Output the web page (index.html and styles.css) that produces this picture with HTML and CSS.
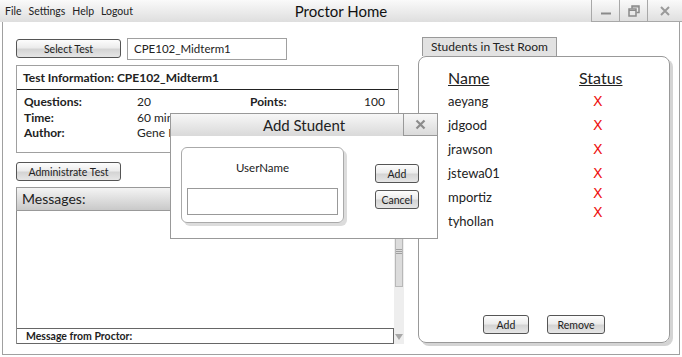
FILE: index.html
```html
<!DOCTYPE html>
<html lang="en">
<head>
    <meta charset="UTF-8">
    <meta name="viewport" content="width=device-width, initial-scale=1.0">
    <title>Proctor Home</title>
    <link rel="stylesheet" href="styles.css">
</head>
<body>
    <div class="window">
        <header class="titlebar">
            <nav class="menu">
                <span>File</span>
                <span>Settings</span>
                <span>Help</span>
                <span>Logout</span>
            </nav>
            <div class="title">Proctor Home</div>
            <div class="controls">
                <span class="ctl">
                    <svg width="12" height="12" viewBox="0 0 12 12"><path d="M1 8.5h10" stroke="#8a8a8a" stroke-width="2"/></svg>
                </span>
                <span class="ctl">
                    <svg width="12" height="12" viewBox="0 0 12 12" fill="none" stroke="#8a8a8a" stroke-width="1.5"><path d="M4 3.5V1h7v6.5H8.5"/><rect x="1" y="4" width="7" height="7"/><path d="M1 5.5h7M4 2h7" stroke-width="1"/></svg>
                </span>
                <span class="ctl">
                    <svg width="12" height="12" viewBox="0 0 12 12"><path d="M2 2l8 8M10 2l-8 8" stroke="#9a9a9a" stroke-width="2"/></svg>
                </span>
            </div>
        </header>

        <div class="frame">
            <section class="left">
                <div class="select-row">
                    <button class="btn btn-wide">Select Test</button>
                    <div class="field">CPE102_Midterm1</div>
                </div>

                <div class="info">
                    <div class="info-head">Test Information: CPE102_Midterm1</div>
                    <div class="info-grid">
                        <b>Questions:</b><span>20</span><b>Points:</b><span class="num">100</span>
                        <b>Time:</b><span>60 minutes</span><span></span><span></span>
                        <b>Author:</b><span>Gene Fisher</span><span></span><span></span>
                    </div>
                </div>

                <button class="btn btn-wide admin">Administrate Test</button>

                <div class="messages">
                    <div class="msg-head">Messages:</div>
                    <div class="msg-body">
                        <div class="msg-area">
                            <div class="proctor-row">Message from Proctor:</div>
                        </div>
                        <div class="scrollbar">
                            <div class="thumb"><i></i><i></i><i></i></div>
                            <div class="arrow"></div>
                        </div>
                    </div>
                </div>
            </section>

            <section class="right">
                <div class="tab">Students in Test Room</div>
                <div class="panel">
                    <div class="roster">
                        <span class="col-head">Name</span><span class="col-head">Status</span>
                        <span>aeyang</span><span class="mark">X</span>
                        <span>jdgood</span><span class="mark">X</span>
                        <span>jrawson</span><span class="mark">X</span>
                        <span>jstewa01</span><span class="mark">X</span>
                        <span>mportiz</span><span class="mark up-1">X</span>
                        <span>tyhollan</span><span class="mark up-2">X</span>
                    </div>
                    <div class="panel-actions">
                        <button class="btn btn-add">Add</button>
                        <button class="btn btn-remove">Remove</button>
                    </div>
                </div>
            </section>
        </div>

        <!-- modal dialog over the main window -->
        <div class="dialog">
            <div class="dialog-bar">
                <div class="dialog-title">Add Student</div>
                <span class="dialog-close">
                    <svg width="11" height="11" viewBox="0 0 11 11"><path d="M1.5 1.5l8 8M9.5 1.5l-8 8" stroke="#8c8c8c" stroke-width="2.2"/></svg>
                </span>
            </div>
            <div class="dialog-body">
                <div class="user-box">
                    <div class="user-label">UserName</div>
                    <div class="user-input"></div>
                </div>
                <div class="dialog-actions">
                    <button class="btn btn-small">Add</button>
                    <button class="btn btn-small">Cancel</button>
                </div>
            </div>
        </div>
    </div>
</body>
</html>
```

FILE: styles.css
```css
:root {
    --line: #a0a0a0;
    --dark-line: #555;
    --text: #222;
}

html, body {
    margin: 0;
    padding: 0;
    background: #fff;
}

body {
    font-family: Lato, "Open Sans", sans-serif;
    color: var(--text);
}

.window {
    position: relative;
    width: 682px;
    height: 357px;
    overflow: hidden;
}

/* Title bar */
.titlebar {
    height: 22px;
    display: grid;
    grid-template-columns: 1fr auto 1fr;
    align-items: center;
    background: linear-gradient(#fafafa, #dedede);
}

.menu {
    display: flex;
    gap: 7px;
    padding-left: 5px;
    font-size: 10.5px;
}

.title {
    font-size: 15px;
    color: #111;
}

.controls {
    display: flex;
    justify-content: flex-end;
    height: 22px;
}

.ctl {
    width: 28px;
    display: flex;
    align-items: center;
    justify-content: center;
    border-left: 1px solid #a8a8a8;
    border-bottom: 1px solid #a8a8a8;
    box-sizing: border-box;
}

.ctl:last-child {
    width: 35px;
}

/* Main frame */
.frame {
    height: 333px;
    margin: 0 2px;
    border: 1px solid var(--line);
    border-top: none;
    box-sizing: border-box;
    display: flex;
    gap: 14px;
    padding: 15px 6px 0 13px;
}

.btn {
    font-family: inherit;
    font-size: 10.5px;
    color: #222;
    padding: 0;
    border: 1px solid var(--dark-line);
    border-radius: 3px;
    background: linear-gradient(#fdfdfd, #ececec 45%, #d4d4d4 55%, #e6e6e6);
    cursor: pointer;
}

.btn-wide {
    width: 105px;
    height: 19px;
}

/* Left column */
.left {
    width: 388px;
    display: flex;
    flex-direction: column;
}

.select-row {
    display: flex;
    align-items: center;
    gap: 6px;
    height: 23px;
}

.field {
    width: 160px;
    height: 22px;
    box-sizing: border-box;
    border: 1px solid var(--line);
    padding: 3px 6px;
    font-size: 11.5px;
}

.info {
    margin-top: 5px;
    width: 383px;
    height: 88px;
    box-sizing: border-box;
    border: 1px solid var(--line);
}

.info-head {
    height: 23px;
    line-height: 23px;
    padding-left: 6px;
    font-weight: bold;
    font-size: 12px;
    border-bottom: 1px solid #222;
}

.info-grid {
    display: grid;
    grid-template-columns: 113px 113px 1fr auto;
    padding: 4px 13px 0 7px;
    font-size: 12px;
    line-height: 15.5px;
}

.info-grid b {
    font-weight: bold;
}

.admin {
    margin-top: 9px;
}

.messages {
    margin-top: 6px;
    height: 157px;
    display: flex;
    flex-direction: column;
}

.msg-head {
    height: 24px;
    box-sizing: border-box;
    border: 1px solid #999;
    background: linear-gradient(#f4f4f4, #c9c9c9);
    font-size: 14px;
    line-height: 22px;
    padding-left: 5px;
}

.msg-body {
    flex: 1;
    display: flex;
}

.msg-area {
    flex: 1;
    border-left: 1px solid #888;
    display: flex;
    flex-direction: column;
    justify-content: flex-end;
}

.proctor-row {
    height: 16px;
    box-sizing: border-box;
    border: 1px solid #666;
    border-left: none;
    font-size: 10.5px;
    font-weight: bold;
    line-height: 14px;
    padding-left: 9px;
}

.scrollbar {
    width: 10px;
    background: #eeeeee;
    display: flex;
    flex-direction: column;
    align-items: center;
    justify-content: space-between;
}

.thumb {
    margin-top: 4px;
    width: 8px;
    height: 72px;
    box-sizing: border-box;
    border: 1px solid #b8b8b8;
    background: #dcdcdc;
    display: flex;
    flex-direction: column;
    justify-content: center;
    gap: 1px;
    align-items: center;
}

.thumb i {
    display: block;
    width: 6px;
    height: 1px;
    background: #a0a0a0;
}

.arrow {
    margin-bottom: 4px;
    width: 0;
    height: 0;
    border-left: 4px solid transparent;
    border-right: 4px solid transparent;
    border-top: 6px solid #a8a8a8;
}

/* Right column */
.right {
    flex: 1;
    display: flex;
    flex-direction: column;
}

.tab {
    align-self: flex-start;
    margin-left: 4px;
    width: 135px;
    height: 19px;
    box-sizing: border-box;
    border: 1px solid #999;
    border-bottom: none;
    background: #e2e2e2;
    font-size: 12px;
    line-height: 18px;
    text-align: center;
}

.panel {
    width: 252px;
    height: 287px;
    box-sizing: border-box;
    border: 1px solid #999;
    border-radius: 8px;
    box-shadow: 3px 3px 0 #d4d4d4;
    display: flex;
    flex-direction: column;
    justify-content: space-between;
    padding: 8px 0 8px 29px;
}

.roster {
    display: grid;
    grid-template-columns: 131px auto;
    grid-auto-rows: 24px;
    align-items: center;
    font-size: 13px;
}

.col-head {
    font-size: 16px;
    text-decoration: underline;
}

.mark {
    color: #ee1111;
    font-family: "DejaVu Sans", sans-serif;
    font-size: 14px;
    padding-left: 14px;
}

.up-1 {
    margin-top: -8px;
}

.up-2 {
    margin-top: -18px;
}

.panel-actions {
    display: flex;
    justify-content: center;
    gap: 18px;
    margin-left: -29px;
}

.btn-add {
    width: 46px;
    height: 19px;
}

.btn-remove {
    width: 58px;
    height: 19px;
}

/* Add Student dialog */
.dialog {
    position: absolute;
    left: 170px;
    top: 113px;
    width: 268px;
    height: 126px;
    box-sizing: border-box;
    border: 1px solid #999;
    background: #fff;
}

.dialog-bar {
    height: 22px;
    display: flex;
    background: linear-gradient(#f7f7f7, #d9d9d9);
}

.dialog-title {
    flex: 1;
    text-align: center;
    font-size: 15px;
    line-height: 22px;
    padding-left: 34px;
}

.dialog-close {
    width: 34px;
    border-left: 1px solid #999;
    border-bottom: 1px solid #999;
    box-sizing: border-box;
    display: flex;
    align-items: center;
    justify-content: center;
}

.dialog-body {
    display: flex;
    padding: 11px 0 0 10px;
    gap: 31px;
}

.user-box {
    width: 163px;
    height: 76px;
    box-sizing: border-box;
    border: 1px solid #aaa;
    border-radius: 6px;
    box-shadow: 3px 3px 0 #dcdcdc;
    display: flex;
    flex-direction: column;
    align-items: center;
    padding-top: 13px;
}

.user-label {
    font-size: 11.5px;
}

.user-input {
    margin-top: 14px;
    width: 151px;
    height: 27px;
    box-sizing: border-box;
    border: 1px solid #999;
}

.dialog-actions {
    display: flex;
    flex-direction: column;
    gap: 7px;
    padding-top: 17px;
}

.btn-small {
    width: 44px;
    height: 19px;
}
```
